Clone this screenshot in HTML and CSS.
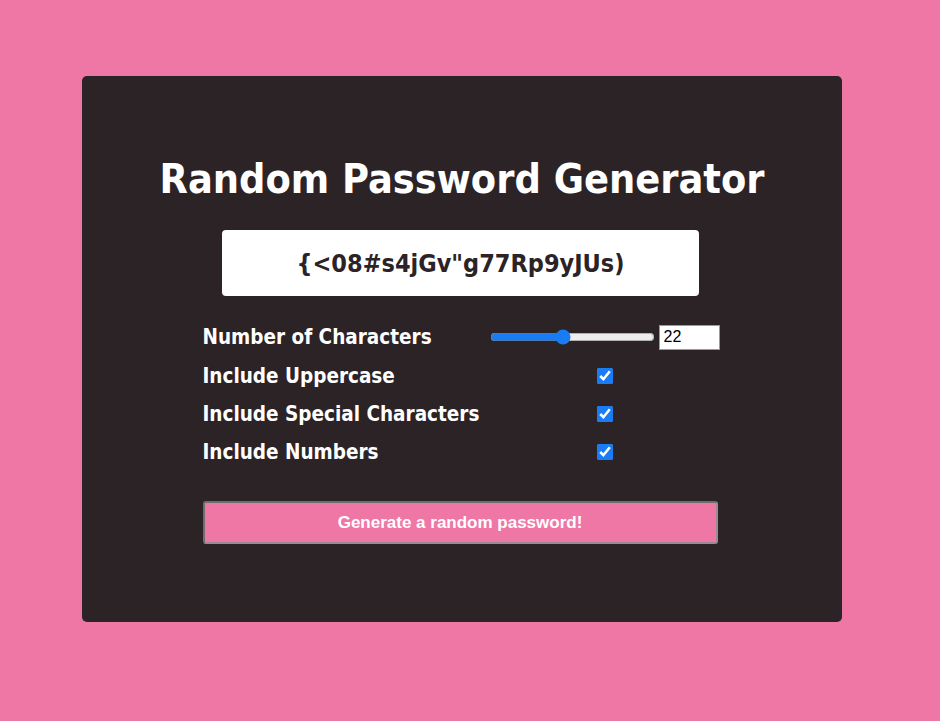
FILE: index.html
```html
<!DOCTYPE html>
<html lang="en">
<head>
<meta charset="utf-8">
<title>Random Password Generator</title>
<link rel="stylesheet" href="styles.css">
</head>
<body>
<main class="card">
  <h1 class="title">Random Password Generator</h1>
  <div class="output">{&lt;08#s4jGv"g77Rp9yJUs)</div>
  <form class="form">
    <div class="grid">
      <label class="label" for="len">Number of Characters</label>
      <div class="control length">
        <input class="range" type="range" min="8" max="40" value="22" id="len">
        <input class="number" type="number" value="22">
      </div>
      <label class="label" for="upper">Include Uppercase</label>
      <div class="control"><input class="check" type="checkbox" id="upper" checked></div>
      <label class="label" for="special">Include Special Characters</label>
      <div class="control"><input class="check" type="checkbox" id="special" checked></div>
      <label class="label" for="nums">Include Numbers</label>
      <div class="control"><input class="check" type="checkbox" id="nums" checked></div>
    </div>
    <button class="generate" type="button">Generate a random password!</button>
  </form>
</main>
</body>
</html>
```
FILE: styles.css
```css
html, body {
  margin: 0;
  padding: 0;
}
body {
  background: #ef77a6;
  font-family: "DejaVu Sans Condensed", "DejaVu Sans", sans-serif;
  min-height: 721px;
  padding: 76px 0 0 82px;
  box-sizing: border-box;
}
.card {
  width: 760px;
  height: 546px;
  box-sizing: border-box;
  background: #2b2326;
  border-radius: 5px;
  display: flex;
  flex-direction: column;
  align-items: center;
  padding-top: 79px;
}
.title {
  margin: 0;
  color: #fff;
  font-size: 41px;
  line-height: 49px;
  font-weight: bold;
}
.output {
  margin-top: 26px;
  margin-right: 3px;
  width: 477px;
  height: 66px;
  background: #fff;
  border-radius: 4px;
  display: flex;
  align-items: center;
  justify-content: center;
  color: #2b2326;
  font-size: 25px;
  font-weight: bold;
}
.form {
  margin-top: 21px;
  margin-right: 2px;
  width: 517px;
  display: flex;
  flex-direction: column;
}
.grid {
  display: grid;
  grid-template-columns: 287px 230px;
  grid-template-rows: 40px 38px 38px 38px;
  align-items: center;
}
.label {
  color: #fff;
  font-size: 20.5px;
  font-weight: bold;
}
.control {
  display: flex;
  justify-content: center;
  align-items: center;
}
.length {
  justify-content: flex-start;
  gap: 4px;
}
.range {
  width: 165px;
  margin: 0;
  accent-color: #1a7cf5;
}
.number {
  width: 61px;
  height: 25px;
  box-sizing: border-box;
  margin: 0;
  border: 1px solid #9a9a9a;
  padding: 1px 4px;
  font-family: "Liberation Sans", Arial, sans-serif;
  font-size: 16px;
  color: #000;
  background: #fff;
}
.check {
  width: 16px;
  height: 16px;
  margin: 0;
  accent-color: #1a7cf5;
}
.generate {
  margin-top: 30px;
  width: 515px;
  height: 43px;
  background: #ef77a6;
  color: #fff;
  font-family: "Liberation Sans", Arial, sans-serif;
  font-size: 17px;
  font-weight: bold;
  border: 2px solid;
  border-color: #6e6e6e #9c8a92 #9c8a92 #6e6e6e;
  border-radius: 3px;
}
```
